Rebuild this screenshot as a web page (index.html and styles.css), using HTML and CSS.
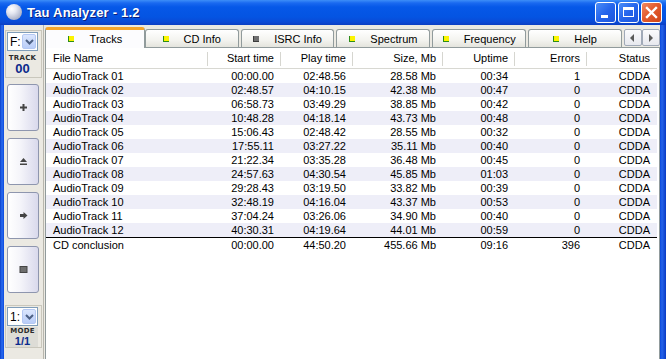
FILE: index.html
```html
<!DOCTYPE html>
<html lang="en">
<head>
    <meta charset="UTF-8">
    <title>Tau Analyzer - 1.2</title>
    <link rel="stylesheet" href="styles.css">
</head>
<body>
    <div class="window">
        <div class="titlebar">
            <span class="app-icon"></span>
            <span class="title">Tau Analyzer - 1.2</span>
            <div class="caption-buttons">
                <span class="cap cap-min"><span class="min-bar"></span></span>
                <span class="cap cap-max"><span class="max-box"></span></span>
                <span class="cap cap-close">
                    <svg width="13" height="13" viewBox="0 0 13 13"><path d="M2 2 L11 11 M11 2 L2 11" stroke="#fff" stroke-width="2.4" stroke-linecap="square"/></svg>
                </span>
            </div>
        </div>

        <div class="client">
            <aside class="sidebar">
                <div class="group">
                    <div class="combo">
                        <span class="combo-text">F:</span>
                        <span class="combo-btn"><svg width="9" height="6" viewBox="0 0 9 6"><path d="M1 1 L4.5 4.5 L8 1" fill="none" stroke="#4d6185" stroke-width="2"/></svg></span>
                    </div>
                    <div class="caption">TRACK</div>
                    <div class="counter">00</div>
                </div>

                <button class="tool"><svg width="9" height="9" viewBox="0 0 9 9"><path d="M4.5 1 V8 M1 4.5 H8" stroke="#444" stroke-width="2"/></svg></button>
                <button class="tool"><svg width="9" height="9" viewBox="0 0 9 9"><path d="M4.5 1 L8 5 H1 Z" fill="#444"/><rect x="1" y="6.5" width="7" height="1.5" fill="#444"/></svg></button>
                <button class="tool"><svg width="9" height="9" viewBox="0 0 9 9"><path d="M1 3 H4.5 V1 L8.5 4.5 L4.5 8 V6 H1 Z" fill="#444"/></svg></button>
                <button class="tool"><svg width="9" height="9" viewBox="0 0 9 9"><rect x="1" y="1.5" width="7" height="6" fill="#6e6e6e" stroke="#444" stroke-width="1"/></svg></button>

                <div class="group group-mode">
                    <div class="combo">
                        <span class="combo-text">1:</span>
                        <span class="combo-btn"><svg width="9" height="6" viewBox="0 0 9 6"><path d="M1 1 L4.5 4.5 L8 1" fill="none" stroke="#4d6185" stroke-width="2"/></svg></span>
                    </div>
                    <div class="caption">MODE</div>
                    <div class="counter small">1/1</div>
                </div>
            </aside>

            <main class="tabs">
                <div class="tabstrip">
                    <div class="tab active"><span class="led"></span>Tracks</div>
                    <div class="tab"><span class="led"></span>CD Info</div>
                    <div class="tab"><span class="led off"></span>ISRC Info</div>
                    <div class="tab"><span class="led"></span>Spectrum</div>
                    <div class="tab"><span class="led"></span>Frequency</div>
                    <div class="tab"><span class="led"></span>Help</div>
                    <div class="scroller">
                        <span class="arrow"><svg width="5" height="8" viewBox="0 0 5 8"><path d="M4 0 V8 L0 4 Z" fill="#5a5a5a"/></svg></span>
                        <span class="arrow"><svg width="5" height="8" viewBox="0 0 5 8"><path d="M1 0 V8 L5 4 Z" fill="#5a5a5a"/></svg></span>
                    </div>
                </div>

                <div class="tabpage">
                    <table class="tracks">
                        <colgroup>
                            <col class="c-name">
                            <col class="c-start">
                            <col class="c-play">
                            <col class="c-size">
                            <col class="c-up">
                            <col class="c-err">
                            <col class="c-status">
                        </colgroup>
                        <thead>
                            <tr>
                                <th class="left">File Name</th>
                                <th>Start time</th>
                                <th>Play time</th>
                                <th>Size, Mb</th>
                                <th>Uptime</th>
                                <th>Errors</th>
                                <th>Status</th>
                            </tr>
                        </thead>
                        <tbody>
                            <tr><td class="left">AudioTrack 01</td><td>00:00.00</td><td>02:48.56</td><td>28.58 Mb</td><td>00:34</td><td>1</td><td>CDDA</td></tr>
                            <tr><td class="left">AudioTrack 02</td><td>02:48.57</td><td>04:10.15</td><td>42.38 Mb</td><td>00:47</td><td>0</td><td>CDDA</td></tr>
                            <tr><td class="left">AudioTrack 03</td><td>06:58.73</td><td>03:49.29</td><td>38.85 Mb</td><td>00:42</td><td>0</td><td>CDDA</td></tr>
                            <tr><td class="left">AudioTrack 04</td><td>10:48.28</td><td>04:18.14</td><td>43.73 Mb</td><td>00:48</td><td>0</td><td>CDDA</td></tr>
                            <tr><td class="left">AudioTrack 05</td><td>15:06.43</td><td>02:48.42</td><td>28.55 Mb</td><td>00:32</td><td>0</td><td>CDDA</td></tr>
                            <tr><td class="left">AudioTrack 06</td><td>17:55.11</td><td>03:27.22</td><td>35.11 Mb</td><td>00:40</td><td>0</td><td>CDDA</td></tr>
                            <tr><td class="left">AudioTrack 07</td><td>21:22.34</td><td>03:35.28</td><td>36.48 Mb</td><td>00:45</td><td>0</td><td>CDDA</td></tr>
                            <tr><td class="left">AudioTrack 08</td><td>24:57.63</td><td>04:30.54</td><td>45.85 Mb</td><td>01:03</td><td>0</td><td>CDDA</td></tr>
                            <tr><td class="left">AudioTrack 09</td><td>29:28.43</td><td>03:19.50</td><td>33.82 Mb</td><td>00:39</td><td>0</td><td>CDDA</td></tr>
                            <tr><td class="left">AudioTrack 10</td><td>32:48.19</td><td>04:16.04</td><td>43.37 Mb</td><td>00:53</td><td>0</td><td>CDDA</td></tr>
                            <tr><td class="left">AudioTrack 11</td><td>37:04.24</td><td>03:26.06</td><td>34.90 Mb</td><td>00:40</td><td>0</td><td>CDDA</td></tr>
                            <tr><td class="left">AudioTrack 12</td><td>40:30.31</td><td>04:19.64</td><td>44.01 Mb</td><td>00:59</td><td>0</td><td>CDDA</td></tr>
                            <tr class="total"><td class="left">CD conclusion</td><td>00:00.00</td><td>44:50.20</td><td>455.66 Mb</td><td>09:16</td><td>396</td><td>CDDA</td></tr>
                        </tbody>
                    </table>
                </div>
            </main>
        </div>
    </div>
</body>
</html>
```

FILE: styles.css
```css
* {
    box-sizing: border-box;
}
body {
    margin: 0;
    background-color: #fff;
    font-family: 'Liberation Sans', Arial, sans-serif;
    font-size: 11px;
    color: #000;
    overflow: hidden;
}
.window {
    width: 666px;
    height: 359px;
    display: flex;
    flex-direction: column;
    background: linear-gradient(to right, #0a3fc9 0, #2a6cf0 2px, #0a48dc 4px, #0a48dc 660px, #2563ea 662px, #0a3bc4 666px);
}

/* title bar */
.titlebar {
    height: 25px;
    flex: none;
    display: flex;
    align-items: center;
    padding: 0 4px 0 6px;
    background: linear-gradient(#3d8ef8 0, #1a69f0 3px, #0658e8 7px, #0454e2 17px, #0a4ad6 22px, #0b3ec2 25px);
}
.app-icon {
    width: 16px;
    height: 16px;
    border-radius: 50%;
    background: radial-gradient(circle at 35% 30%, #ffffff 0, #e6e8f2 30%, #a9b0c8 75%, #7d86a4 100%);
    margin-top: -2px;
}
.title {
    margin-left: 5px;
    color: #fff;
    font-weight: bold;
    font-size: 13px;
    letter-spacing: 0.2px;
    text-shadow: 1px 1px 0 #0a1f80;
    flex: 1;
}
.caption-buttons {
    display: flex;
    gap: 2px;
    margin-top: -1px;
}
.cap {
    width: 21px;
    height: 21px;
    border: 1px solid #fff;
    border-radius: 3px;
    display: flex;
    align-items: center;
    justify-content: center;
    background: linear-gradient(135deg, #4b8df7 0, #2565ec 50%, #1d55dc 100%);
}
.cap-min {
    align-items: flex-end;
    justify-content: flex-start;
    padding: 0 0 4px 5px;
}
.min-bar {
    width: 7px;
    height: 3px;
    background-color: #fff;
}
.max-box {
    width: 11px;
    height: 10px;
    border: 1px solid #fff;
    border-top-width: 3px;
}
.cap-close {
    background: linear-gradient(135deg, #f08a64 0, #e35b2e 45%, #cf4416 100%);
}

/* client area */
.client {
    flex: 1;
    display: flex;
    margin: 0 6px 0 4px;
    background-color: #ebe9e2;
    min-height: 0;
}
.sidebar {
    width: 40px;
    flex: none;
    padding: 5px 0 0 1px;
    border-right: 1px solid #b8b6ad;
    display: flex;
    flex-direction: column;
}
.group {
    width: 37px;
    height: 48px;
    border: 1px solid #c9c7bc;
    padding: 1px 0 0 1px;
}
.group-mode {
    height: 43px;
    margin-top: 12px;
}
.combo {
    width: 31px;
    height: 19px;
    background-color: #fff;
    border: 1px solid #7f9db9;
    display: flex;
    align-items: center;
    justify-content: space-between;
    padding: 1px;
}
.combo-text {
    font-size: 12px;
    padding-left: 1px;
}
.combo-btn {
    width: 14px;
    height: 15px;
    border-radius: 2px;
    background: linear-gradient(#dbe6fd, #b9cdf8);
    border: 1px solid #b4c8f3;
    display: flex;
    align-items: center;
    justify-content: center;
}
.caption {
    margin-top: 3px;
    text-align: center;
    font-family: 'DejaVu Sans', sans-serif;
    font-size: 7px;
    font-weight: bold;
    color: #2c2c2c;
    letter-spacing: 0.3px;
    line-height: 8px;
    width: 31px;
}
.counter {
    width: 31px;
    text-align: center;
    font-size: 13px;
    font-weight: bold;
    color: #0b2a8c;
    line-height: 14px;
}
.counter.small {
    font-size: 11px;
    line-height: 12px;
}
.group-mode .caption {
    margin-top: 1px;
    background-color: #dddcd6;
}
.group-mode .counter {
    background-color: #dddcd6;
}
.tool {
    width: 32px;
    height: 47px;
    margin: 6px 0 0 2px;
    padding: 0;
    border: 1px solid #8e96ae;
    border-radius: 3px;
    background: linear-gradient(to right, #ffffff 0, #f5f5fa 40%, #d9d9ec 100%);
    display: flex;
    align-items: center;
    justify-content: center;
}
.tool + .tool {
    margin-top: 7px;
}

/* tabs */
.tabs {
    flex: 1;
    display: flex;
    flex-direction: column;
    margin-left: 1px;
    min-width: 0;
}
.tabstrip {
    height: 22px;
    flex: none;
    display: flex;
    align-items: flex-end;
    gap: 2px;
    position: relative;
    z-index: 1;
}
.tab {
    width: 94px;
    height: 18px;
    border: 1px solid #919b9c;
    border-bottom: none;
    border-radius: 3px 3px 0 0;
    background: linear-gradient(#ffffff, #f3f3ef 60%, #e4e4dd);
    display: flex;
    align-items: center;
    justify-content: center;
    gap: 15px;
    font-size: 11px;
    padding-top: 1px;
}
.tab.active {
    width: 100px;
    height: 21px;
    margin-right: -2px;
    margin-bottom: -1px;
    background: #fcfcfe;
    border-top: 3px solid #f5a52c;
    padding-bottom: 2px;
    gap: 16px;
}
.led {
    width: 6px;
    height: 6px;
    background-color: #fcf400;
    border-left: 1px solid #2e8d1a;
    border-bottom: 1px solid #2e8d1a;
}
.led.off {
    background-color: #6f6f6f;
    border-color: #3c3c3c;
}
.scroller {
    display: flex;
    margin-bottom: 1px;
}
.arrow {
    width: 18px;
    height: 17px;
    border: 1px solid #a0a9b8;
    border-radius: 2px;
    background: linear-gradient(#fbfbfd, #e7e8ee);
    display: flex;
    align-items: center;
    justify-content: center;
}
.tabpage {
    flex: 1;
    background-color: #fff;
    border: 1px solid #919b9c;
    border-bottom: none;
    width: 615px;
}

/* track list */
.tracks {
    table-layout: fixed;
    width: 611px;
    border-collapse: collapse;
}
.c-name { width: 162px; }
.c-start { width: 73px; }
.c-play { width: 72px; }
.c-size { width: 90px; }
.c-up { width: 72px; }
.c-err { width: 72px; }
.c-status { width: 70px; }
.tracks th {
    height: 20px;
    font-weight: normal;
    text-align: right;
    padding: 1px 7px 0 7px;
    border-bottom: 1px solid #d8d8d2;
    background: linear-gradient(#d6d6d0, #d6d6d0) right 4px / 1px 14px no-repeat, #fff;
    white-space: nowrap;
}
.tracks th:last-child {
    background: #fff;
}
.tracks td {
    height: 14px;
    padding: 0 7px;
    text-align: right;
    white-space: nowrap;
    line-height: 14px;
}
.tracks .left {
    text-align: left;
}
.tracks tbody tr:nth-child(even) {
    background-color: #eeeef8;
}
.tracks tr.total td {
    border-top: 1px solid #000;
    height: 15px;
}
```
